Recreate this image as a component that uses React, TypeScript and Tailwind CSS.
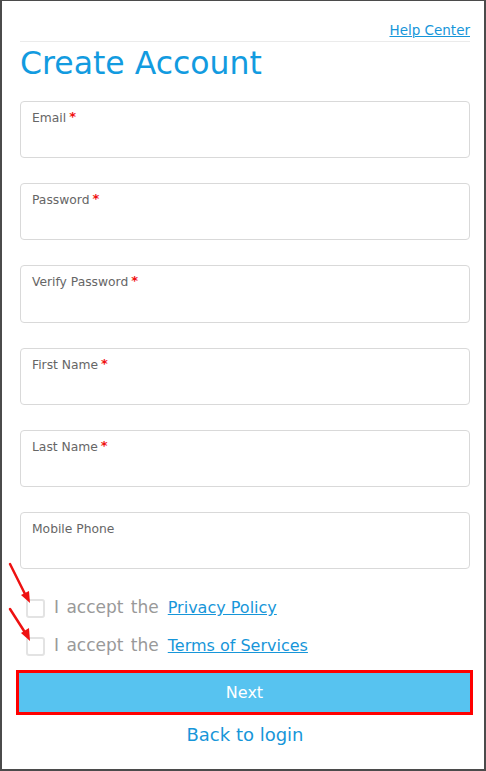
import React from "react";

const Field = ({ label, required }: { label: string; required?: boolean }) => (
  <div className="h-[57.2px] w-full rounded-[4px] border border-[#d9d9d9] bg-white px-[11px] pt-[8px]">
    <div className="flex items-start text-[12.3px] leading-[16px] text-[#666]">
      <span>{label}</span>
      {required && <span className="ml-[3px] text-[13px] font-bold leading-[14px] text-[#f01010]">*</span>}
    </div>
  </div>
);

const Check = ({ link }: { link: string }) => (
  <div className="flex h-[20px] items-center">
    <div className="ml-[6px] h-[19px] w-[19px] rounded-[3px] border-2 border-[#e3e3e3] bg-white" />
    <span className="ml-[9px] text-[17px] text-[#999] [word-spacing:2px]">I accept the</span>
    <a href="#" className="ml-[9px] text-[16px] text-[#1796d9] underline">{link}</a>
  </div>
);

export default function App() {
  return (
    <div
      className="relative h-[771px] w-[486px] border-x-2 border-b-2 border-t border-[#4b4b4b] bg-white"
      style={{ fontFamily: '"DejaVu Sans", Verdana, sans-serif' }}
    >
      <div className="flex flex-col pl-[18px] pr-[14px]">
        <div className="flex h-[41px] items-end justify-end border-b border-[#ebebeb] pb-[3px]">
          <a href="#" className="text-[13.5px] leading-[16px] text-[#1796d9] underline">Help Center</a>
        </div>
        <h1 className="mt-[2px] text-[31.5px] leading-[38px] text-[#129be0]">Create Account</h1>
        <div className="mt-[19px] flex flex-col gap-[25px]">
          <Field label="Email" required />
          <Field label="Password" required />
          <Field label="Verify Password" required />
          <Field label="First Name" required />
          <Field label="Last Name" required />
          <Field label="Mobile Phone" />
        </div>
        <div className="mt-[29px] flex flex-col gap-[18px]">
          <Check link="Privacy Policy" />
          <Check link="Terms of Services" />
        </div>
        <div className="-ml-[4px] -mr-[3px] mt-[14px] border-[3px] border-[#ff0000]">
          <button className="flex h-[39px] w-full items-center justify-center bg-[#57c3f0] text-[16px] text-white">
            Next
          </button>
        </div>
        <div className="mt-[8px] text-center text-[18px] leading-[24px] text-[#1796d9]">Back to login</div>
      </div>
      <svg className="pointer-events-none absolute left-0 top-0" width="60" height="660" viewBox="0 0 60 660">
        <g stroke="#ee1111" strokeWidth="2.5" fill="#ee1111" strokeLinecap="round">
          <line x1="8" y1="563" x2="24" y2="595" />
          <polygon points="28,602 19,594 27,590" stroke="none" />
          <line x1="8" y1="608" x2="24" y2="633" />
          <polygon points="28,640 19,632 27,627" stroke="none" />
        </g>
      </svg>
    </div>
  );
}
